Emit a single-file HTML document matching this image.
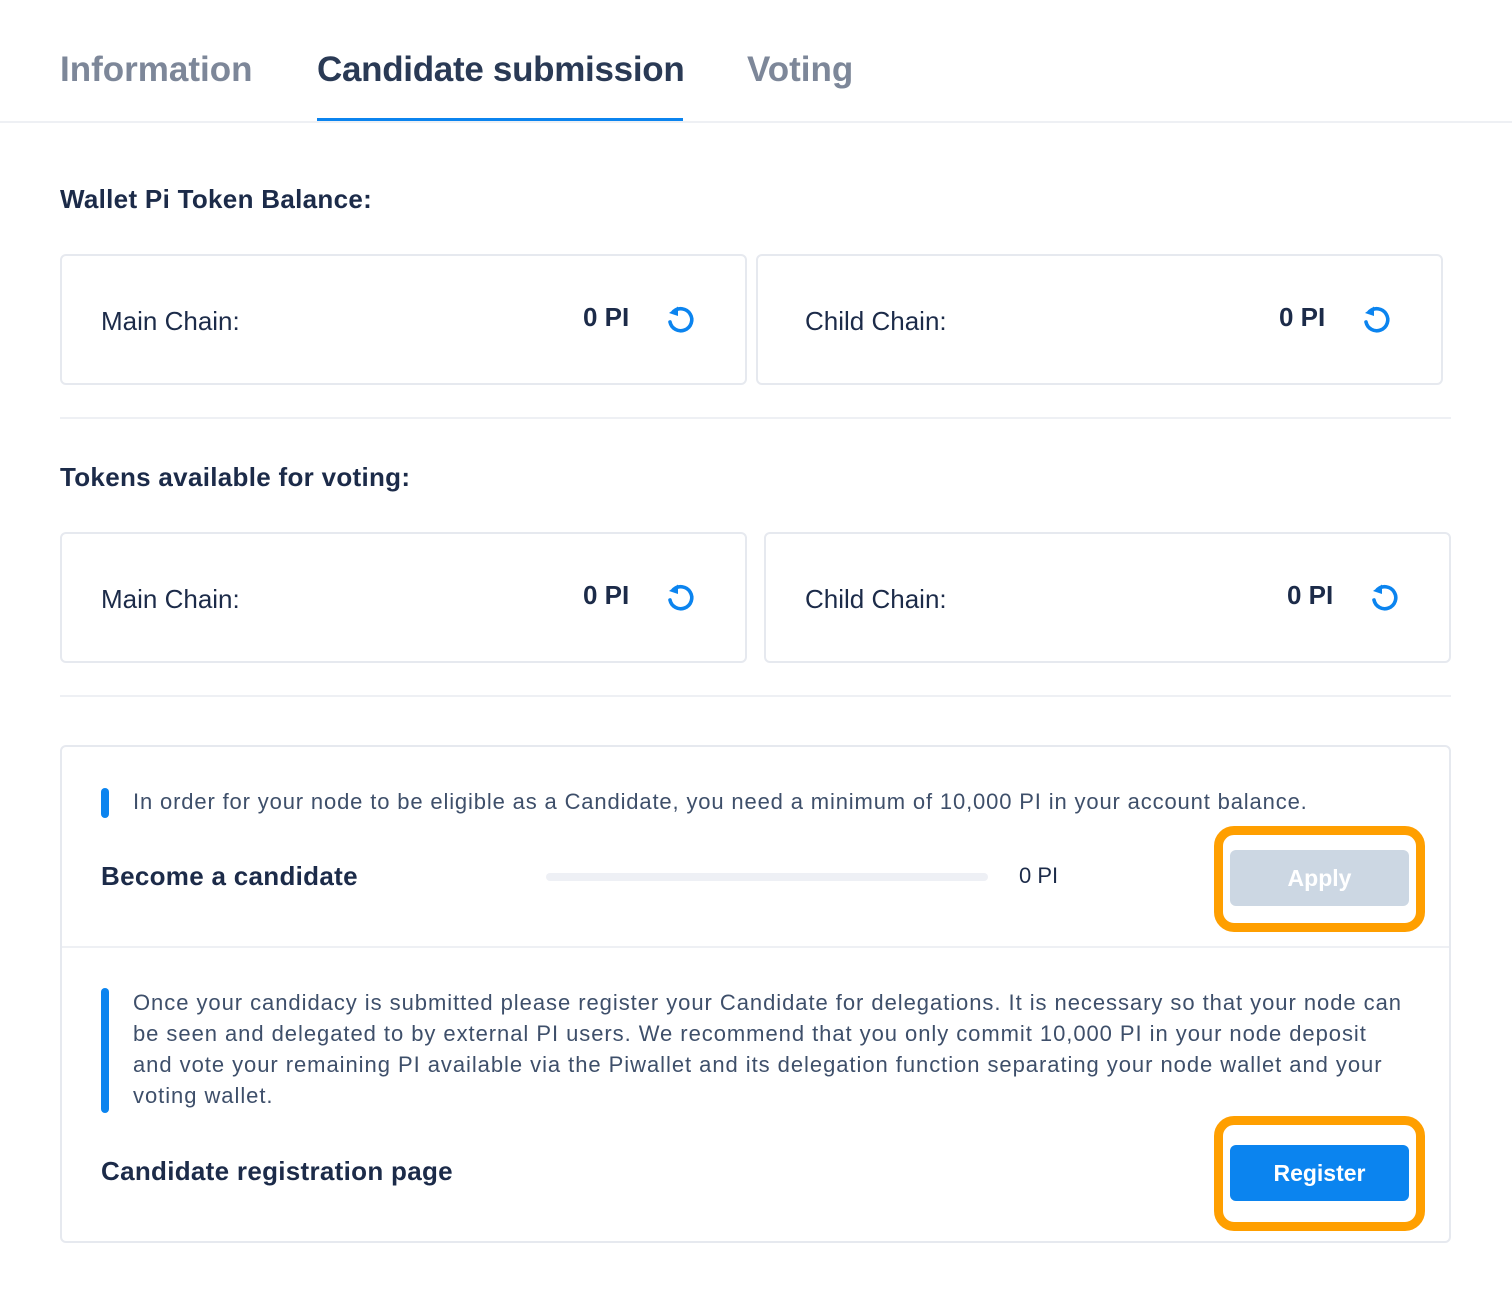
<!DOCTYPE html>
<html><head><meta charset="utf-8"><style>
*{margin:0;padding:0;box-sizing:border-box}
body{width:1512px;height:1298px;background:#fff;font-family:"Liberation Sans",sans-serif;color:#1c2b49;position:relative;overflow:hidden}
.a{position:absolute;white-space:nowrap}
.tab{font-size:35px;font-weight:bold;top:50px}
.card{position:absolute;border:2px solid #e6e9ef;border-radius:6px;height:131px}
.lbl{font-size:26px;color:#1c2b49}
.val{font-size:26px;font-weight:bold}
.h{font-size:26px;font-weight:bold;letter-spacing:0.3px}
.hr{position:absolute;height:2px;background:#eef0f4;left:60px;width:1391px}
.p{font-size:22px;color:#3e4f6a;line-height:31px;letter-spacing:0.95px}
.bar{position:absolute;width:8px;background:#0b84ef;border-radius:4px}
.ico{position:absolute;width:34px;height:34px}
</style></head><body>
<div class="a tab" style="left:60px;color:#7d8799">Information</div>
<div class="a tab" style="left:317px;color:#2a3a55;letter-spacing:-0.3px">Candidate submission</div>
<div class="a tab" style="left:747px;color:#7d8799">Voting</div>
<div class="a" style="left:317px;top:118px;width:366px;height:3px;background:#0b84ef"></div>
<div class="a" style="left:0;top:121px;width:1512px;height:2px;background:#eef0f4"></div>

<div class="a h" style="left:60px;top:184px">Wallet Pi Token Balance:</div>
<div class="card" style="left:60px;top:254px;width:687px"></div>
<div class="card" style="left:756px;top:254px;width:687px"></div>
<div class="a lbl" style="left:101px;top:306px">Main Chain:</div>
<div class="a val" style="left:583px;top:302px">0 PI</div>
<div class="a lbl" style="left:805px;top:306px">Child Chain:</div>
<div class="a val" style="left:1279px;top:302px">0 PI</div>
<div class="hr" style="top:417px"></div>

<div class="a h" style="left:60px;top:462px">Tokens available for voting:</div>
<div class="card" style="left:60px;top:532px;width:687px"></div>
<div class="card" style="left:764px;top:532px;width:687px"></div>
<div class="a lbl" style="left:101px;top:584px">Main Chain:</div>
<div class="a val" style="left:583px;top:580px">0 PI</div>
<div class="a lbl" style="left:805px;top:584px">Child Chain:</div>
<div class="a val" style="left:1287px;top:580px">0 PI</div>
<div class="hr" style="top:695px"></div>

<svg width="0" height="0" style="position:absolute"><defs><g id="r"><path d="M9.5 8.5 A11 11 0 1 1 6 19" fill="none" stroke="#0b84ef" stroke-width="3.6" stroke-linecap="round"/><polygon points="5,10 14,3.5 14,13" fill="#0b84ef"/></g></defs></svg>
<svg class="ico" style="left:664px;top:303px" viewBox="0 0 34 34"><use href="#r"/></svg>
<svg class="ico" style="left:1360px;top:303px" viewBox="0 0 34 34"><use href="#r"/></svg>
<svg class="ico" style="left:664px;top:581px" viewBox="0 0 34 34"><use href="#r"/></svg>
<svg class="ico" style="left:1368px;top:581px" viewBox="0 0 34 34"><use href="#r"/></svg>

<div class="a" style="left:60px;top:745px;width:1391px;height:498px;border:2px solid #e6e9ef;border-radius:6px"></div>
<div class="a" style="left:62px;top:946px;width:1387px;height:2px;background:#eef0f4"></div>
<div class="bar" style="left:101px;top:788px;height:30px"></div>
<div class="a p" style="left:133px;top:786px;letter-spacing:0.85px">In order for your node to be eligible as a Candidate, you need a minimum of 10,000 PI in your account balance.</div>
<div class="a h" style="left:101px;top:861px">Become a candidate</div>
<div class="a" style="left:546px;top:873px;width:442px;height:8px;background:#eef0f5;border-radius:4px"></div>
<div class="a" style="left:1019px;top:863px;font-size:22px">0 PI</div>
<div class="a" style="left:1214px;top:826px;width:211px;height:106px;border:9px solid #ff9f00;border-radius:20px"></div>
<div class="a" style="left:1230px;top:850px;width:179px;height:56px;background:#ccd7e3;border-radius:6px;color:#fff;font-size:23px;font-weight:bold;text-align:center;line-height:56px">Apply</div>

<div class="bar" style="left:101px;top:988px;height:125px"></div>
<div class="a p" style="left:133px;top:987px">Once your candidacy is submitted please register your Candidate for delegations. It is necessary so that your node can<br>be seen and delegated to by external PI users. We recommend that you only commit 10,000 PI in your node deposit<br>and vote your remaining PI available via the Piwallet and its delegation function separating your node wallet and your<br>voting wallet.</div>
<div class="a h" style="left:101px;top:1156px">Candidate registration page</div>
<div class="a" style="left:1214px;top:1116px;width:211px;height:115px;border:9px solid #ff9f00;border-radius:20px"></div>
<div class="a" style="left:1230px;top:1145px;width:179px;height:56px;background:#0b84ef;border-radius:6px;color:#fff;font-size:23px;font-weight:bold;text-align:center;line-height:56px">Register</div>
</body></html>
